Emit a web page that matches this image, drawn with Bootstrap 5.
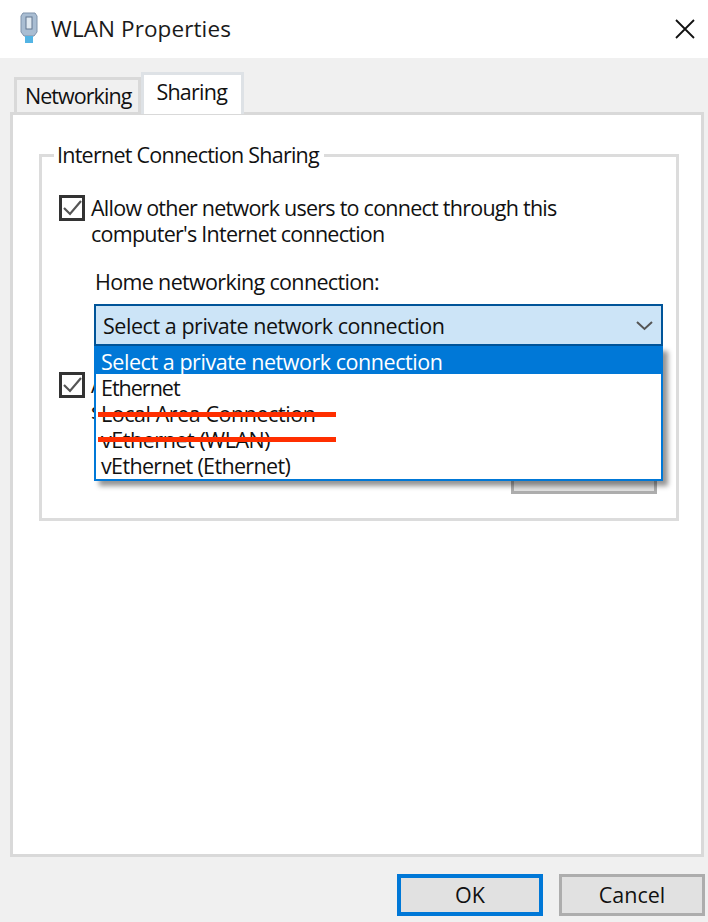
<!DOCTYPE html>
<html lang="en">
<head>
<meta charset="utf-8">
<title>WLAN Properties</title>
<link href="https://cdn.jsdelivr.net/npm/bootstrap@5.3.0/dist/css/bootstrap.min.css" rel="stylesheet">
<style>
html,body{height:922px;overflow:hidden}
body{background:#f0f0f0;color:#111;font:21.5px/26px "Open Sans","Liberation Sans",sans-serif;letter-spacing:-.45px}
.win-title{height:58px;background:#fff;padding:0 12px 0 20px}
.win-icon{margin-top:-3px}
.win-title-text{margin-left:13px;font-size:22.5px;letter-spacing:.1px;color:#1a1a1a}
.win-close{background:none;border:0;padding:0;width:20px;height:20px;margin-right:1px;line-height:0}
.win-body{padding:14px 4px 0 10px}
.tabbar{padding-left:4px;height:40px;border:0;flex-wrap:nowrap;align-items:flex-end}
.tabbar .nav-link{border:3px solid #d9d9d9;border-bottom:0;border-radius:0;color:#111;background:#f0f0f0;height:35px;margin:0;padding:1px 7px 0 8px;line-height:30px;display:block;letter-spacing:-.95px}
.tabbar .nav-link.active{background:#fff;color:#111;height:42px;margin:0 0 -2px 0;padding:2px 14px 0 12px;position:relative;z-index:2;letter-spacing:-.75px}
.sheet{height:745px;background:#fff;border:3px solid #d9d9d9;padding:27px 22px 0 26px;border-radius:0;position:relative}
.group-box{border:3px solid #dcdcdc;height:379px;padding:0 13px 0 17px}
.group-box legend{float:none;width:auto;font:inherit;letter-spacing:-.75px;line-height:26px;margin:0 0 0 -5px;padding:0 5px 0 3px}
.chk{width:26px;height:26px;border:3px solid #333;background:#fff;flex:none;margin-top:0;margin-right:6px;line-height:0}
.chk-row{margin-top:27px;line-height:26px;letter-spacing:-.75px}
.home-block{margin:22px 0 0 35px;position:relative}
.home-label{letter-spacing:-.65px;padding-left:1px}
.combo{height:42px;margin-top:9px;background:#cce4f7;border:2px solid #005499;padding:0 7px;position:relative;line-height:40px}
.combo svg{position:absolute;right:8px;top:14px}
.combo-list.dropdown-menu{position:absolute;display:block;left:0;right:0;top:77px;margin:0;padding:0;min-width:0;font-size:inherit;color:inherit;background:#fff;border:2px solid #0078d7;border-radius:0;box-shadow:5px 5px 5px rgba(0,0,0,.42);z-index:5;height:135px}
.combo-list .dropdown-item{padding:0 5px;line-height:26px;height:26px;color:#111}
.combo-list .dropdown-item.active{background:#0078d7;color:#fff;height:26px;padding-top:1px;margin-bottom:1px}
.combo-list .item-tight{letter-spacing:-1px}
.combo-list .item-mid{letter-spacing:-.65px}
.strike{position:absolute;left:2px;width:238px;height:5px;background:#ff2f00}
.strike-a{top:64px}.strike-b{top:89px}
.row-two{margin-top:26px}
.settings{margin:27px 6px 0 auto;display:block;width:146px;height:43px;background:#e1e1e1;border:3px solid #adadad;border-radius:0;color:#111;font:inherit;padding:0 0 9px}
.foot{padding:17px 0 0 0;margin-right:-1px;gap:16px}
.dlg-btn{width:146px;height:42px;background:#e1e1e1;border:3px solid #adadad;border-radius:0;color:#111;font:inherit;padding:0}
.dlg-btn-default{border:4px solid #0078d7}
</style>
</head>
<body>
<header class="win-title d-flex align-items-center">
  <svg class="win-icon" width="18" height="31" viewBox="0 0 18 31" aria-hidden="true"><path d="M3 1h12l2 3v16l-3 4H4l-3-4V4z" fill="#a9bdd2" stroke="#7f93ab"/><rect x="6" y="5" width="6" height="12" fill="#dfe8f0" stroke="#62778f"/><rect x="5" y="24" width="8" height="7" fill="#53b4e4"/></svg>
  <span class="win-title-text flex-grow-1">WLAN Properties</span>
  <button class="win-close" aria-label="Close"><svg width="20" height="20" viewBox="0 0 20 20"><path d="M1 1l18 18M19 1L1 19" stroke="#111" stroke-width="1.8" fill="none"/></svg></button>
</header>
<main class="win-body">
  <ul class="nav nav-tabs tabbar">
    <li class="nav-item"><a class="nav-link" href="#">Networking</a></li>
    <li class="nav-item"><a class="nav-link active" href="#">Sharing</a></li>
  </ul>
  <section class="sheet">
    <fieldset class="group-box">
      <legend>Internet Connection Sharing</legend>
      <div class="d-flex chk-row">
        <span class="chk"><svg width="20" height="20" viewBox="0 0 20 20"><path d="M2 10l6 6L19 3" stroke="#555" stroke-width="2.2" fill="none"/></svg></span>
        <span>Allow other network users to connect through this<br>computer's Internet connection</span>
      </div>
      <div class="home-block">
        <div class="home-label">Home networking connection:</div>
        <div class="combo">Select a private network connection
          <svg width="17" height="11" viewBox="0 0 17 11"><path d="M1 2l7.500 7 7.500-7" stroke="#555" stroke-width="2" fill="none"/></svg>
        </div>
        <div class="dropdown-menu combo-list">
          <a class="dropdown-item active" href="#">Select a private network connection</a>
          <a class="dropdown-item item-tight" href="#">Ethernet</a>
          <a class="dropdown-item" href="#">Local Area Connection</a>
          <a class="dropdown-item" href="#">vEthernet (WLAN)</a>
          <a class="dropdown-item item-mid" href="#">vEthernet (Ethernet)</a>
          <span class="strike strike-a"></span><span class="strike strike-b"></span>
        </div>
      </div>
      <div class="d-flex row-two">
        <span class="chk"><svg width="20" height="20" viewBox="0 0 20 20"><path d="M2 10l6 6L19 3" stroke="#555" stroke-width="2.2" fill="none"/></svg></span>
        <span>Allow other network users to control or disable the<br>shared Internet connection</span>
      </div>
      <button class="btn settings">Settings...</button>
    </fieldset>
  </section>
  <footer class="d-flex justify-content-end foot">
    <button class="btn dlg-btn dlg-btn-default">OK</button>
    <button class="btn dlg-btn">Cancel</button>
  </footer>
</main>
<script src="https://cdn.jsdelivr.net/npm/bootstrap@5.3.0/dist/js/bootstrap.bundle.min.js"></script>
</body>
</html>
